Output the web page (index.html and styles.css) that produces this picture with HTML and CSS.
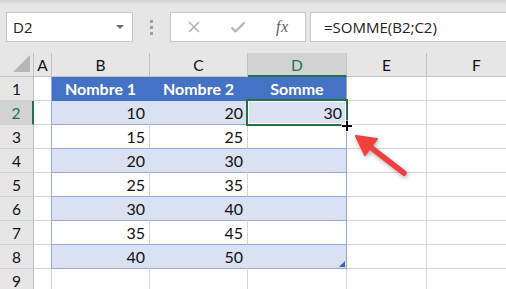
FILE: index.html
```html
<!DOCTYPE html>
<html lang="fr">
<head>
    <meta charset="UTF-8">
    <title>SOMME</title>
    <link rel="stylesheet" href="styles.css">
</head>
<body>
    <!-- Formula bar -->
    <div class="toolbar">
        <div class="namebox">
            <span>D2</span>
            <span class="caret"></span>
        </div>
        <div class="grip"><i></i><i></i><i></i></div>
        <div class="fnbtns">
            <svg class="ico" width="14" height="14" viewBox="0 0 14 14">
                <path d="M2 2 L12 12 M12 2 L2 12" stroke="#b4b4b4" stroke-width="1.6" fill="none"/>
            </svg>
            <svg class="ico" width="16" height="14" viewBox="0 0 16 14">
                <path d="M1.5 7.5 L5.5 11.5 L14.5 2.5" stroke="#b4b4b4" stroke-width="2.2" fill="none"/>
            </svg>
            <span class="fx">fx</span>
        </div>
        <div class="formula">=SOMME(B2;C2)</div>
    </div>

    <!-- Sheet grid -->
    <div class="sheet">
        <div class="c ch corner"></div>
        <div class="c ch">A</div>
        <div class="c ch">B</div>
        <div class="c ch">C</div>
        <div class="c ch active">D</div>
        <div class="c ch">E</div>
        <div class="c ch">F</div>

        <div class="c rh">1</div>
        <div class="c edge"></div>
        <div class="c th">Nombre 1</div>
        <div class="c th">Nombre 2</div>
        <div class="c th last">Somme</div>
        <div class="c"></div>
        <div class="c"></div>

        <div class="c rh active">2</div>
        <div class="c edge"></div>
        <div class="c band">10</div>
        <div class="c band">20</div>
        <div class="c band last sel">30</div>
        <div class="c"></div>
        <div class="c"></div>

        <div class="c rh">3</div>
        <div class="c edge"></div>
        <div class="c tw">15</div>
        <div class="c tw">25</div>
        <div class="c tw last"></div>
        <div class="c"></div>
        <div class="c"></div>

        <div class="c rh">4</div>
        <div class="c edge"></div>
        <div class="c band">20</div>
        <div class="c band">30</div>
        <div class="c band last"></div>
        <div class="c"></div>
        <div class="c"></div>

        <div class="c rh">5</div>
        <div class="c edge"></div>
        <div class="c tw">25</div>
        <div class="c tw">35</div>
        <div class="c tw last"></div>
        <div class="c"></div>
        <div class="c"></div>

        <div class="c rh">6</div>
        <div class="c edge"></div>
        <div class="c band">30</div>
        <div class="c band">40</div>
        <div class="c band last"></div>
        <div class="c"></div>
        <div class="c"></div>

        <div class="c rh">7</div>
        <div class="c edge"></div>
        <div class="c tw">35</div>
        <div class="c tw">45</div>
        <div class="c tw last"></div>
        <div class="c"></div>
        <div class="c"></div>

        <div class="c rh">8</div>
        <div class="c edge"></div>
        <div class="c band">40</div>
        <div class="c band">50</div>
        <div class="c band last resize"></div>
        <div class="c"></div>
        <div class="c"></div>

        <div class="c rh">9</div>
        <div class="c"></div>
        <div class="c"></div>
        <div class="c"></div>
        <div class="c"></div>
        <div class="c"></div>
        <div class="c"></div>
    </div>

    <!-- Fill cursor and callout arrow -->
    <svg class="overlay" width="506" height="289" viewBox="0 0 506 289">
        <path d="M347 120.5 V131.5 M341.5 126 H352.5" stroke="#fff" stroke-width="4"/>
        <path d="M347 121 V131 M342 126 H352" stroke="#000" stroke-width="2"/>
        <g class="arrow">
            <path d="M404 173 L369 146" stroke="#f0403e" stroke-width="5.5" stroke-linecap="round"/>
            <path d="M356 136 L377 139 L365 155 Z" fill="#f0403e" stroke="#f0403e" stroke-width="2" stroke-linejoin="round"/>
        </g>
    </svg>
</body>
</html>
```

FILE: styles.css
```css
body {
    margin: 0;
    width: 506px;
    height: 289px;
    overflow: hidden;
    position: relative;
    background-color: #fff;
    font-family: Lato, "Liberation Sans", sans-serif;
}

/* formula bar */
.toolbar {
    height: 53px;
    box-sizing: border-box;
    padding: 12px 0 0 6px;
    display: flex;
    align-items: flex-start;
    background: linear-gradient(#d4d4d4, #e6e6e6 5px);
    font-family: "Open Sans", "Noto Sans", sans-serif;
}

.namebox, .fnbtns, .formula {
    height: 30px;
    box-sizing: border-box;
    background-color: #fff;
    border: 1px solid #c6c6c6;
}

.namebox {
    width: 127px;
    display: flex;
    align-items: center;
    justify-content: space-between;
    padding: 0 8px 0 6px;
    font-size: 15px;
    color: #222;
}

.caret {
    width: 0;
    height: 0;
    border-left: 4px solid transparent;
    border-right: 4px solid transparent;
    border-top: 4px solid #6b6b6b;
}

.grip {
    width: 37px;
    display: flex;
    flex-direction: column;
    align-items: center;
    gap: 3px;
    padding-top: 8px;
}

.grip i {
    width: 3px;
    height: 3px;
    background-color: #a0a0a0;
}

.fnbtns {
    width: 136px;
    display: flex;
    align-items: center;
    padding-left: 16px;
}

.fnbtns .ico:first-child {
    margin-right: 29px;
}

.fnbtns .ico:nth-child(2) {
    margin-right: 30px;
}

.fx {
    font-family: "Liberation Serif", serif;
    font-style: italic;
    font-size: 16px;
    color: #606060;
    letter-spacing: 0.5px;
}

.formula {
    flex: 1;
    margin: 0 -3px 0 4px;
    padding-left: 13px;
    font-size: 15px;
    line-height: 28px;
    color: #222;
}

/* grid */
.sheet {
    display: grid;
    grid-template-columns: 34px 18px 98px 98px 99px 80px 100px;
    grid-auto-rows: 24px;
}

.c {
    box-sizing: border-box;
    border-right: 1px solid #d4d4d4;
    border-bottom: 1px solid #d4d4d4;
    padding: 0 4px;
    font-size: 16px;
    line-height: 24px;
    text-align: right;
    color: #111;
}

.ch {
    background-color: #e6e6e6;
    border-right-color: #c3c3c3;
    border-bottom-color: #c3c3c3;
    text-align: center;
    padding: 0;
    font-size: 15.5px;
}

.rh {
    background-color: #e6e6e6;
    border-right-color: #bdbdbd;
    border-bottom-color: #cfcfcf;
    text-align: center;
    padding: 0;
    font-size: 15.5px;
}

.ch.active {
    background-color: #d2d2d2;
    color: #217346;
    border-bottom: 2px solid #217346;
}

.rh.active {
    background-color: #d2d2d2;
    color: #217346;
    border-right: 2px solid #217346;
}

.corner {
    position: relative;
}

.corner::after {
    content: '';
    position: absolute;
    right: 3px;
    bottom: 4px;
    width: 17px;
    height: 17px;
    background-color: #b6b6b6;
    clip-path: polygon(100% 0, 100% 100%, 0 100%);
}

/* table */
.edge {
    border-right-color: #8eaadb;
}

.th {
    background-color: #4472c4;
    border-right-color: #4472c4;
    border-bottom-color: #4472c4;
    color: #fff;
    font-weight: bold;
    text-align: center;
}

.band {
    background-color: #d9e1f2;
    border-right-color: #d9e1f2;
    border-bottom-color: #8eaadb;
}

.tw {
    border-bottom-color: #8eaadb;
}

.last {
    border-right-color: #8eaadb;
}

.sel {
    position: relative;
}

.sel::after {
    content: '';
    position: absolute;
    left: -2px;
    top: -2px;
    right: -2px;
    bottom: -2px;
    border: 2px solid #217346;
    box-shadow: inset 0 0 0 1px #fff;
}

.resize {
    position: relative;
}

.resize::after {
    content: '';
    position: absolute;
    right: 1px;
    bottom: 1px;
    width: 6px;
    height: 6px;
    background-color: #3f5fb8;
    clip-path: polygon(100% 0, 100% 100%, 0 100%);
}

.overlay {
    position: absolute;
    left: 0;
    top: 0;
    pointer-events: none;
}

.arrow {
    filter: drop-shadow(1px 2px 2px rgba(0, 0, 0, 0.3));
}
```
